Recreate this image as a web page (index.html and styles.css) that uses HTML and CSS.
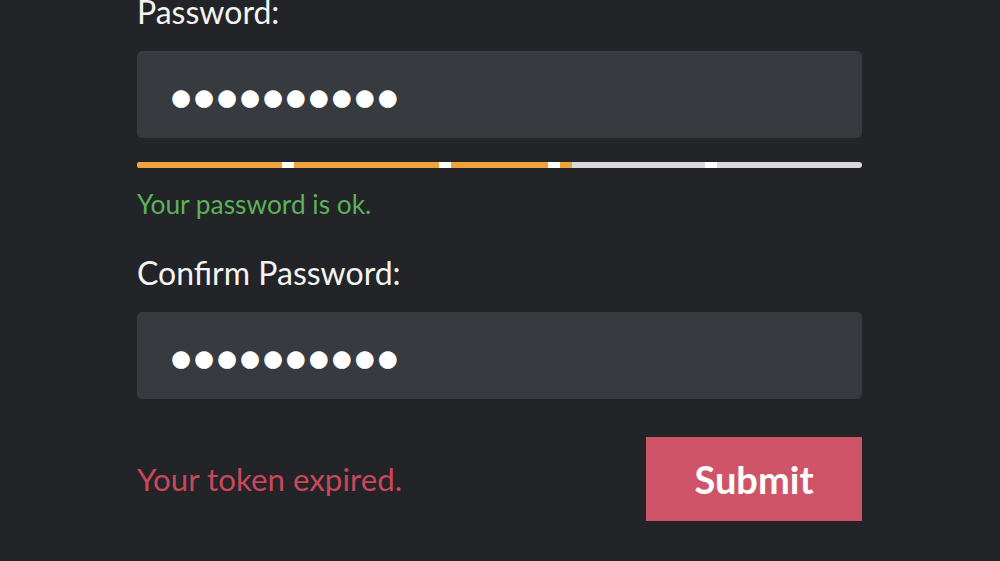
FILE: index.html
```html
<!DOCTYPE html>
<html lang="en">
<head>
	<meta charset="UTF-8">
	<title>Reset password</title>
	<link rel="stylesheet" href="styles.css">
</head>
<body>
<form class="reset-form">
	<label class="field-label">Password:</label>
	<div class="field-box"><span class="field-dots">●●●●●●●●●●</span></div>

	<div class="strength">
		<div class="strength-fill" style="width: 60%"></div>
		<span class="strength-tick tick-1"></span>
		<span class="strength-tick tick-2"></span>
		<span class="strength-tick tick-3"></span>
		<span class="strength-tick tick-4"></span>
	</div>
	<p class="msg msg-ok">Your password is ok.</p>

	<label class="field-label">Confirm Password:</label>
	<div class="field-box"><span class="field-dots">●●●●●●●●●●</span></div>

	<div class="form-foot">
		<p class="msg msg-error">Your token expired.</p>
		<button type="button" class="btn-submit">Submit</button>
	</div>
</form>
</body>
</html>
```

FILE: styles.css
```css
html, body {
	margin: 0;
	padding: 0;
	background: #222427;
	font-family: Lato, "Open Sans", sans-serif;
	color: #f4f4f4;
	overflow: hidden;
}

.reset-form {
	width: 725px;
	margin: -7px 0 0 137px;
	display: flex;
	flex-direction: column;
}

.field-label {
	display: block;
	font-size: 32px;
	line-height: 1.2;
	color: #f4f4f4;
}

.field-box {
	margin-top: 20px;
	height: 87px;
	background: #373a3e;
	border-radius: 5px;
	display: flex;
	align-items: center;
	padding: 5px 0 0 34px;
	box-sizing: border-box;
}

.field-dots {
	font-family: "DejaVu Sans", sans-serif;
	font-size: 23px;
	letter-spacing: 2.9px;
	color: #fff;
}

.strength {
	position: relative;
	margin-top: 24px;
	height: 6px;
	border-radius: 3px;
	background: #d9d9d9;
	overflow: hidden;
}

.strength-fill {
	height: 100%;
	background: #efa43a;
}

.strength-tick {
	position: absolute;
	top: 0;
	width: 12px;
	height: 100%;
	background: #fff;
}

.tick-1 { left: 145px; }
.tick-2 { left: 302px; }
.tick-3 { left: 411px; }
.tick-4 { left: 568px; }

.msg {
	margin: 0;
	line-height: 1.2;
}

.msg-ok {
	margin-top: 21px;
	margin-bottom: 33px;
	font-size: 26.3px;
	color: #5cb25c;
}

.msg-error {
	font-size: 31.3px;
	color: #c9485b;
}

.form-foot {
	margin-top: 38px;
	display: flex;
	justify-content: space-between;
	align-items: center;
}

.btn-submit {
	width: 216px;
	height: 84px;
	border: 0;
	border-radius: 0;
	background: #cf5468;
	color: #fff;
	font-family: Lato, sans-serif;
	font-weight: 700;
	font-size: 38px;
	padding: 0;
}
```
